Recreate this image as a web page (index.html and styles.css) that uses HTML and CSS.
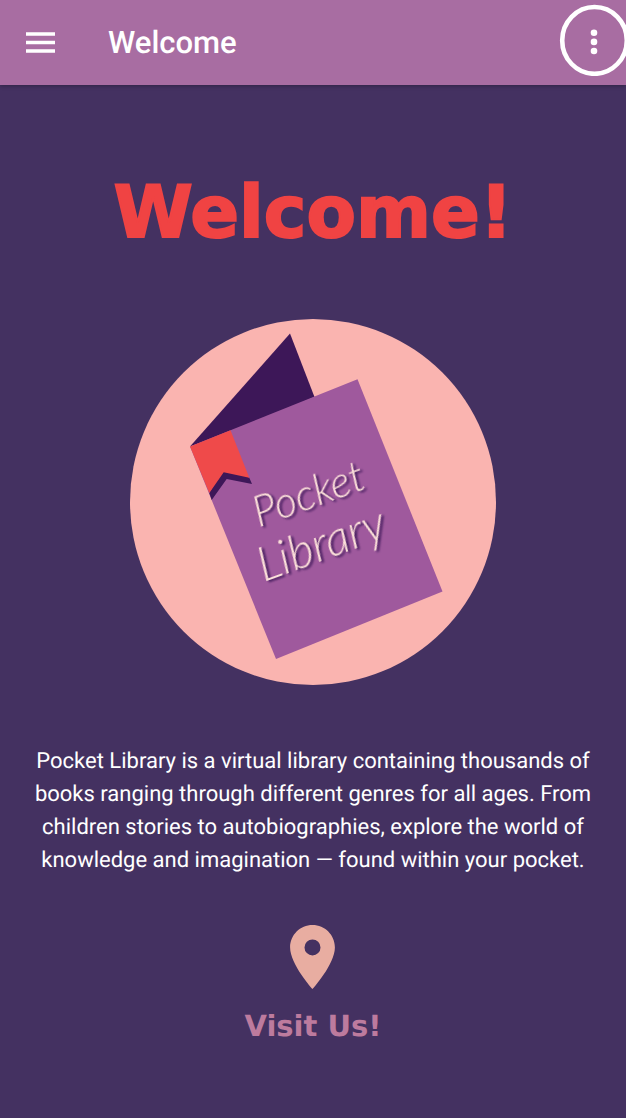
FILE: index.html
```html
<!DOCTYPE html>
<html lang="en">
<head>
<meta charset="utf-8">
<meta name="viewport" content="width=device-width, initial-scale=1">
<title>Pocket Library</title>
<link rel="stylesheet" href="styles.css">
</head>
<body class="page">
<header class="app-bar">
  <button class="icon-button" type="button" aria-label="Open navigation">
    <svg class="menu-icon" viewBox="0 0 29 21" aria-hidden="true"><path d="M0 2h29M0 10.500h29M0 19h29" stroke="currentColor" stroke-width="3.300"/></svg>
  </button>
  <span class="app-title">Welcome</span>
  <button class="icon-button more-button" type="button" aria-label="More options">
    <svg class="more-icon" viewBox="0 0 70 72" aria-hidden="true">
      <ellipse cx="35.500" cy="36.400" rx="32.300" ry="33.400" fill="none" stroke="currentColor" stroke-width="4.600"/>
      <g fill="currentColor"><circle cx="35" cy="28.700" r="3.300"/><circle cx="35" cy="37.900" r="3.300"/><circle cx="35" cy="47" r="3.300"/></g>
    </svg>
  </button>
</header>
<main class="content">
  <h1 class="headline">Welcome!</h1>
  <svg class="logo" viewBox="0 0 366 366" role="img" aria-label="Pocket Library">
    <circle cx="183" cy="183" r="183" fill="#fab4b0"/>
    <path d="M60 127.500 160 14.500 184.500 78 120 106Z" fill="#3d1758"/>
    <path d="M60 127.500 227.500 60.300 312.500 272.500 146 340Z" fill="#9f599d"/>
    <path d="M119.300 158.700 122 165 96.700 160 81.700 181 79.300 174 94 148Z" fill="#3d1758"/>
    <path d="M60 127.500 100.500 111.300 119.300 158.700 93.700 153.300 79.300 174Z" fill="#ef4a4a"/>
    <g class="logo-text" transform="rotate(-20 136 208)">
      <text class="logo-pocket" x="129" y="206">Pocket</text>
      <text class="logo-library" x="115" y="259">Library</text>
    </g>
  </svg>
  <p class="intro">Pocket Library is a virtual library containing thousands of books ranging through different genres for all ages. From children stories to autobiographies, explore the world of knowledge and imagination — found within your pocket.</p>
  <a class="visit" href="#visit">
    <svg class="pin" viewBox="5 2 14 20" aria-hidden="true"><path fill="currentColor" d="M12 2C8.130 2 5 5.130 5 9c0 5.250 7 13 7 13s7-7.750 7-13c0-3.870-3.130-7-7-7zm0 9.500a2.500 2.500 0 1 1 0-5 2.500 2.500 0 0 1 0 5z"/></svg>
    <span>Visit Us!</span>
  </a>
</main>
</body>
</html>
```
FILE: styles.css
```css
* {
  box-sizing: border-box;
}

.page {
  margin: 0;
  min-height: 100vh;
  background: #443161;
  color: #fff;
  font-family: Roboto, sans-serif;
  text-rendering: geometricPrecision;
  overflow-x: hidden;
}

.app-bar {
  position: relative;
  display: flex;
  align-items: center;
  height: 85px;
  padding: 0 26px;
  background: #a86da2;
  box-shadow: 0 1px 4px rgba(0, 0, 0, 0.3);
}

.icon-button {
  display: flex;
  padding: 0;
  border: 0;
  background: none;
  color: inherit;
  cursor: pointer;
}

.menu-icon {
  width: 29px;
  height: 21px;
}

.app-title {
  margin-left: 53px;
  font-size: 31px;
  font-weight: 500;
  line-height: 36px;
}

/* The highlight ring runs slightly past the edge of the bar. */
.more-button {
  position: absolute;
  top: 4px;
  right: -3px;
}

.more-icon {
  width: 70px;
  height: 72px;
}

.content {
  display: flex;
  flex-direction: column;
  align-items: center;
  padding: 85px 32px 48px;
}

.headline {
  margin: 0;
  color: #f04343;
  font-family: "DejaVu Sans", sans-serif;
  font-size: 72px;
  font-weight: 700;
  line-height: 84px;
  -webkit-text-stroke: 2px #f04343;
  stroke-linejoin: round;
}

.logo {
  width: 366px;
  max-width: 100%;
  margin-top: 65px;
}

.logo-text {
  fill: #fce0da;
  font-family: Lato, sans-serif;
  font-style: italic;
  font-weight: 300;
  filter: drop-shadow(2px 2px 1px #3d1758);
}

.logo-pocket {
  font-size: 43px;
}

.logo-library {
  font-size: 48px;
}

.intro {
  max-width: 560px;
  margin: 60px 0 0;
  font-size: 22px;
  line-height: 33px;
  text-align: center;
}

.visit {
  display: flex;
  flex-direction: column;
  align-items: center;
  gap: 20px;
  margin-top: 48px;
  color: #bd7b9e;
  font-family: "DejaVu Sans", sans-serif;
  font-size: 29px;
  font-weight: 700;
  line-height: 34px;
  text-decoration: none;
}

.pin {
  width: 45px;
  height: 64px;
  color: #e8ada1;
}
```
